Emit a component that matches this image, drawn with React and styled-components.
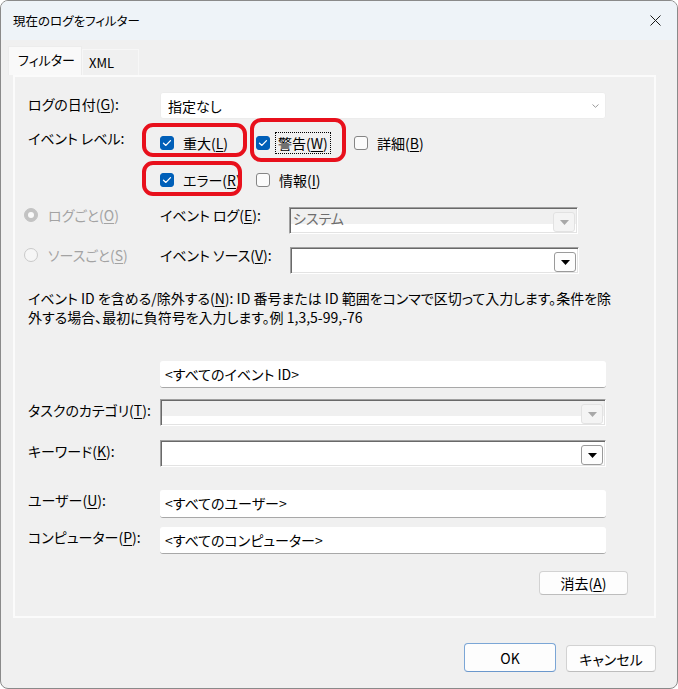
import React from "react";
import styled, { createGlobalStyle } from "styled-components";

const GlobalStyle = createGlobalStyle`
  html, body {
    margin: 0;
    padding: 0;
    background: #ffffff;
  }
  body {
    font-family: "Noto Sans CJK JP", "Noto Sans", sans-serif;
    font-size: 14px;
    font-feature-settings: "palt" 1;
    color: #000;
  }
  * {
    box-sizing: border-box;
  }
`;

const Window = styled.div`
  width: 678px;
  height: 689px;
  border: 1px solid #8a8a8a;
  border-radius: 8px;
  overflow: hidden;
  background: #f0f0f0;
  display: flex;
  flex-direction: column;
`;

const TitleBar = styled.div`
  height: 39px;
  flex-shrink: 0;
  background: #eef3f8;
  display: flex;
  align-items: center;
  justify-content: space-between;
  padding: 0 16px 0 12px;
`;

const Title = styled.div`
  font-size: 12.5px;
  line-height: 16px;
`;

const CloseButton = styled.div`
  width: 12px;
  height: 12px;
  display: flex;
  align-items: center;
  justify-content: center;
`;

const Body = styled.div`
  padding: 6px 0 0 7px;
`;

const TabStrip = styled.div`
  display: flex;
  align-items: flex-end;
  height: 29px;
`;

const Tab = styled.div`
  width: ${p => p.w}px;
  height: ${p => (p.active ? 29 : 26)}px;
  padding: 0 0 ${p => (p.active ? 3 : 0)}px ${p => (p.active ? 9 : 6)}px;
  background: ${p => (p.active ? "#f9f9f9" : "#f0f0f0")};
  border: 1px solid ${p => (p.active ? "#ececec" : "#f7f7f7")};
  border-bottom: none;
  display: flex;
  align-items: center;
  font-size: 13px;
  line-height: 16px;
  white-space: nowrap;
`;

const Panel = styled.div`
  margin-left: 5px;
  width: 643px;
  height: 543px;
  border: 2px solid #fbfbfb;
  background: #f0f0f0;
  padding: 0 0 0 13px;
  display: flex;
  flex-direction: column;
`;

const FieldRow = styled.div`
  display: flex;
  align-items: ${p => (p.top ? "flex-start" : "center")};
  height: ${p => p.h}px;
  margin-top: ${p => p.mt}px;
`;

const Label = styled.div`
  width: ${p => p.w || 132}px;
  flex-shrink: 0;
  line-height: 16px;
  white-space: nowrap;
  margin-bottom: ${p => (p.lift || 0) * 2}px;
  color: ${p => (p.disabled ? "#a3a3a3" : "#000")};
`;

const U = styled.span`
  text-decoration: underline;
  text-underline-offset: 2px;
  text-decoration-thickness: 1px;
`;

const SelectBox = styled.div`
  width: 446px;
  height: 100%;
  background: #fff;
  border: 1px solid #ececec;
  border-radius: 3px;
  display: flex;
  align-items: center;
  justify-content: space-between;
  padding: 0 6px 0 7px;
`;

const TextBox = styled.div`
  width: ${p => p.w || 446}px;
  height: 100%;
  background: #fff;
  border-radius: 3px;
  border-bottom: 1px solid #a8a8a8;
  display: flex;
  align-items: center;
  padding-left: 5px;
  padding-bottom: 1px;
  white-space: nowrap;
`;

const Combo = styled.div`
  width: ${p => p.w}px;
  height: 100%;
  border: 1px solid;
  border-color: #a0a0a0 #ffffff #ffffff #a0a0a0;
  box-shadow: inset 1px 1px 0 #696969, inset -1px -1px 0 #e3e3e3;
  background: ${p => (p.disabled ? "linear-gradient(#f0f0f0 0 16px, #ffffff 16px)" : "#ffffff")};
  display: flex;
  align-items: flex-start;
  justify-content: space-between;
  padding: 2px 2px 2px 3px;
`;

const ComboText = styled.div`
  line-height: 16px;
  color: #6d6d6d;
`;

const DropButton = styled.div`
  width: 22px;
  height: 20px;
  margin-top: 2px;
  border-radius: 3px;
  border: 1px solid ${p => (p.disabled ? "#e2e2e2" : "#9a9a9a")};
  background: ${p => (p.disabled ? "#f4f4f4" : "#fdfdfd")};
  display: flex;
  align-items: center;
  justify-content: center;
`;

const LevelRow = styled.div`
  display: flex;
  align-items: flex-start;
  margin-top: 11px;
`;

const CheckGrid = styled.div`
  position: relative;
  margin-top: 1px;
  display: grid;
  grid-template-columns: 96px 98px auto;
  grid-auto-rows: 24px;
  row-gap: 13px;
`;

const CheckItem = styled.label`
  display: flex;
  align-items: center;
  gap: 8px;
  line-height: 16px;
  white-space: nowrap;
`;

const Box = styled.span`
  width: 14px;
  height: 14px;
  border-radius: 3px;
  flex-shrink: 0;
  background: ${p => (p.checked ? "#005fb8" : "#fbfbfb")};
  border: 1px solid ${p => (p.checked ? "#005fb8" : "#858585")};
  display: flex;
  align-items: center;
  justify-content: center;
`;

const CheckText = styled.span`
  outline: ${p => (p.focused ? "1px dotted #000" : "none")};
  outline-offset: 1px;
  padding: 1px 1px;
  margin-left: ${p => (p.focused ? -1 : 0)}px;
`;

const Highlight = styled.div`
  position: absolute;
  left: ${p => p.x}px;
  top: ${p => p.y}px;
  width: ${p => p.w}px;
  height: ${p => p.h}px;
  border: 4px solid #e8101c;
  border-radius: 11px;
  pointer-events: none;
`;

const RadioOption = styled.div`
  width: 136px;
  margin-left: -4px;
  flex-shrink: 0;
  display: flex;
  align-items: center;
  gap: 10px;
  color: #a3a3a3;
  line-height: 16px;
  white-space: nowrap;
`;

const RadioDot = styled.span`
  width: 14px;
  height: 14px;
  border-radius: 50%;
  flex-shrink: 0;
  background: ${p => (p.checked ? "#c3c3c3" : "#f6f6f6")};
  border: 1px solid ${p => (p.checked ? "#c3c3c3" : "#c9c9c9")};
  display: flex;
  align-items: center;
  justify-content: center;

  &::after {
    content: "";
    display: ${p => (p.checked ? "block" : "none")};
    width: 6px;
    height: 6px;
    border-radius: 50%;
    background: #fafafa;
  }
`;

const Description = styled.div`
  margin-top: 15px;
  line-height: 19px;
  white-space: nowrap;
`;

const Spacer = styled.div`
  width: 132px;
  flex-shrink: 0;
`;

const ClearRow = styled.div`
  display: flex;
  justify-content: flex-end;
  margin-top: 17px;
  padding-right: 26px;
`;

const Button = styled.button`
  font-family: inherit;
  font-size: 14px;
  font-feature-settings: "palt" 1;
  color: #000;
  width: ${p => p.w}px;
  height: ${p => p.h}px;
  background: #fdfdfd;
  border: 1px solid ${p => (p.primary ? "#7ba6d6" : "#d2d2d2")};
  border-bottom-color: ${p => (p.primary ? "#6b98cc" : "#bdbdbd")};
  border-radius: 4px;
  padding: 0;
  display: flex;
  align-items: center;
  justify-content: center;
  line-height: 16px;
`;

const Footer = styled.div`
  display: flex;
  justify-content: flex-end;
  align-items: flex-end;
  gap: 10px;
  margin-top: 25px;
  padding-right: 21px;
`;

const CheckMark = () => (
  <svg width="10" height="8" viewBox="0 0 10 8">
    <path d="M1.5 4.2 L3.9 6.4 L8.5 1.6" fill="none" stroke="#fff" strokeWidth="1.3" strokeLinecap="round" strokeLinejoin="round" />
  </svg>
);

const Check = ({ checked, focused, children }) => (
  <CheckItem>
    <Box checked={checked}>{checked && <CheckMark />}</Box>
    <CheckText focused={focused}>{children}</CheckText>
  </CheckItem>
);

const Triangle = ({ disabled }) => (
  <svg width="9" height="5" viewBox="0 0 9 5">
    <path d="M0 0 H9 L4.5 5 Z" fill={disabled ? "#a8a8a8" : "#000"} />
  </svg>
);

const Chevron = () => (
  <svg width="7" height="4" viewBox="0 0 7 4">
    <path d="M0.5 0.5 L3.5 3.3 L6.5 0.5" fill="none" stroke="#9a9a9a" strokeWidth="1" />
  </svg>
);

const App = () => {
  return (
    <>
      <GlobalStyle />
      <Window>
        <TitleBar>
          <Title>現在のログをフィルター</Title>
          <CloseButton>
            <svg width="11" height="11" viewBox="0 0 11 11">
              <path d="M0.5 0.5 L10.5 10.5 M10.5 0.5 L0.5 10.5" stroke="#1a1a1a" strokeWidth="1" />
            </svg>
          </CloseButton>
        </TitleBar>
        <Body>
          <TabStrip>
            <Tab active w={74}>フィルター</Tab>
            <Tab w={57}>XML</Tab>
          </TabStrip>
          <Panel>
            <FieldRow h={27} mt={15}>
              <Label lift={1.5}>ログの日付(<U>G</U>):</Label>
              <SelectBox>
                <span>指定なし</span>
                <Chevron />
              </SelectBox>
            </FieldRow>

            <LevelRow>
              <Label>イベント レベル:</Label>
              <CheckGrid>
                <Check checked>重大(<U>L</U>)</Check>
                <Check checked focused>警告(<U>W</U>)</Check>
                <Check>詳細(<U>B</U>)</Check>
                <Check checked>エラー(<U>R</U>)</Check>
                <Check>情報(<U>I</U>)</Check>
                <Highlight x={-18} y={-8} w={105} h={34} />
                <Highlight x={90} y={-13} w={96} h={44} />
                <Highlight x={-18} y={30} w={100} h={35} />
              </CheckGrid>
            </LevelRow>

            <FieldRow h={27} mt={15} top>
              <RadioOption>
                <RadioDot checked />
                <span>ログごと(<U>O</U>)</span>
              </RadioOption>
              <Label w={129}>イベント ログ(<U>E</U>):</Label>
              <Combo w={289} disabled>
                <ComboText>システム</ComboText>
                <DropButton disabled>
                  <Triangle disabled />
                </DropButton>
              </Combo>
            </FieldRow>

            <FieldRow h={27} mt={13} top>
              <RadioOption>
                <RadioDot />
                <span>ソースごと(<U>S</U>)</span>
              </RadioOption>
              <Label w={130}>イベント ソース(<U>V</U>):</Label>
              <Combo w={289}>
                <ComboText />
                <DropButton>
                  <Triangle />
                </DropButton>
              </Combo>
            </FieldRow>

            <Description>
              イベント ID を含める/除外する(<U>N</U>): ID 番号または ID 範囲をコンマで区切って入力します。条件を除
              <br />
              外する場合、最初に負符号を入力します。例 1,3,5-99,-76
            </Description>

            <FieldRow h={27} mt={34}>
              <Spacer />
              <TextBox>&lt;すべてのイベント ID&gt;</TextBox>
            </FieldRow>

            <FieldRow h={27} mt={11}>
              <Label lift={2.5}>タスクのカテゴリ(<U>T</U>):</Label>
              <Combo w={446} disabled>
                <ComboText />
                <DropButton disabled>
                  <Triangle disabled />
                </DropButton>
              </Combo>
            </FieldRow>

            <FieldRow h={27} mt={14}>
              <Label lift={2.5}>キーワード(<U>K</U>):</Label>
              <Combo w={446}>
                <ComboText />
                <DropButton>
                  <Triangle />
                </DropButton>
              </Combo>
            </FieldRow>

            <FieldRow h={28} mt={23}>
              <Label lift={4}>ユーザー(<U>U</U>):</Label>
              <TextBox>&lt;すべてのユーザー&gt;</TextBox>
            </FieldRow>

            <FieldRow h={27} mt={9}>
              <Label lift={3.5}>コンピューター(<U>P</U>):</Label>
              <TextBox>&lt;すべてのコンピューター&gt;</TextBox>
            </FieldRow>

            <ClearRow>
              <Button w={89} h={24}>消去(<U>A</U>)</Button>
            </ClearRow>
          </Panel>
          <Footer>
            <Button primary w={92} h={29}>OK</Button>
            <Button w={90} h={27}>キャンセル</Button>
          </Footer>
        </Body>
      </Window>
    </>
  );
};

export default App;
